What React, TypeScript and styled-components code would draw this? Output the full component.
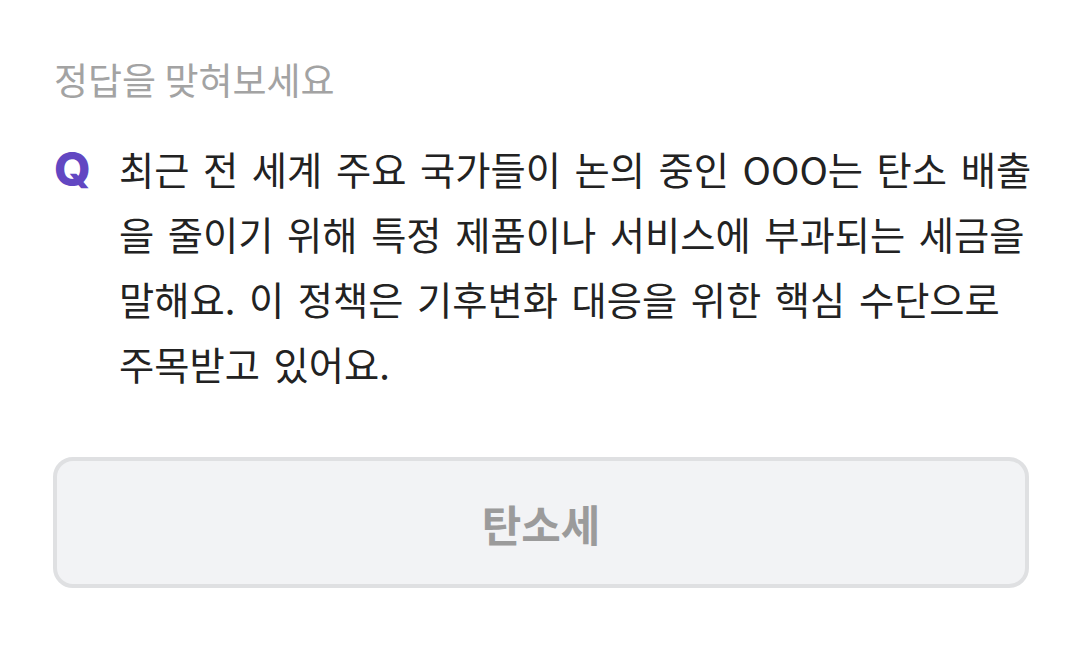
import React from "react";
import styled, { createGlobalStyle } from "styled-components";

const Global = createGlobalStyle`
  html, body { margin: 0; padding: 0; background: #ffffff; }
  body { font-family: "Noto Sans CJK KR", "Noto Sans", sans-serif; }
`;

const Page = styled.div`
  width: 1079px;
  height: 670px;
  box-sizing: border-box;
  padding: 58px 40px 0 53px;
  display: flex;
  flex-direction: column;
`;

const Title = styled.div`
  font-size: 37px;
  line-height: 42px;
  color: #a3a3a3;
  padding-left: 1px;
`;

const Question = styled.div`
  margin-top: 36px;
  display: flex;
  align-items: flex-start;
`;

const QMark = styled.div`
  flex: 0 0 65px;
  font-family: "Inter", "Noto Sans", sans-serif;
  font-weight: 800;
  font-size: 47px;
  line-height: 65px;
  color: #6247c2;
  padding-left: 1px;
`;

const QText = styled.div`
  flex: 1;
  font-size: 38.3px;
  line-height: 65px;
  word-spacing: 5px;
  color: #222222;
  white-space: nowrap;
`;

const Answer = styled.div`
  margin-top: 61px;
  margin-right: 10px;
  height: 131px;
  box-sizing: border-box;
  border: 4px solid #dfe0e2;
  border-radius: 20px;
  background: #f2f3f5;
  display: flex;
  align-items: center;
  justify-content: center;
  font-size: 43px;
  font-weight: 700;
  color: #9b9b9b;
`;

export default function App() {
  return (
    <>
      <Global />
      <Page>
        <Title>정답을 맞혀보세요</Title>
        <Question>
          <QMark>Q</QMark>
          <QText>
            최근 전 세계 주요 국가들이 논의 중인 OOO는 탄소 배출
            <br />
            을 줄이기 위해 특정 제품이나 서비스에 부과되는 세금을
            <br />
            말해요. 이 정책은 기후변화 대응을 위한 핵심 수단으로
            <br />
            주목받고 있어요.
          </QText>
        </Question>
        <Answer>탄소세</Answer>
      </Page>
    </>
  );
}
